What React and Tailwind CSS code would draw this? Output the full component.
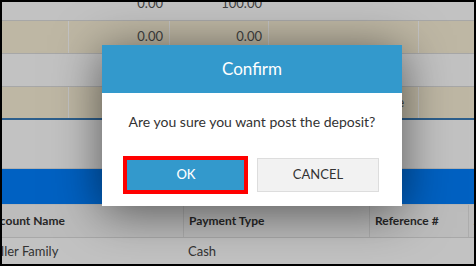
const topRows = [
  { tone: "plain", cells: ["", "0.00", "100.00", "", ""] },
  { tone: "tan", cells: ["", "0.00", "0.00", "", ""] },
  { tone: "plain", cells: ["", "", "", "", ""] },
  { tone: "tan", cells: ["", "", "", "Cheque", ""] },
];

const ConfirmDialog = () => (
  <div className="absolute left-[100px] top-[43px] w-[300px] bg-white shadow-[0_6px_45px_rgba(0,0,0,0.55)]">
    {/* Header */}
    <div className="h-[48px] bg-[#3399cc] flex items-center justify-center">
      <span className="text-[17px] text-white">Confirm</span>
    </div>

    {/* Body */}
    <div className="pt-[20px] text-center text-[14px] leading-[18px] text-[#333]">
      Are you sure you want post the deposit?
    </div>

    {/* Buttons */}
    <div className="relative flex justify-center gap-[10px] pt-[27px] pb-[14px]">
      <button className="w-[122px] h-[34px] bg-[#3399cc] text-white text-[13px] font-medium">
        OK
      </button>
      <button className="w-[122px] h-[34px] bg-[#f2f2f2] border border-[#dddddd] text-[#333] text-[13px]">
        CANCEL
      </button>
      {/* red highlight drawn over the OK button */}
      <div className="absolute left-[21px] top-[25px] w-[125px] h-[38px] border-4 border-[#ff0000]"></div>
    </div>
  </div>
);

export default function App() {
  return (
    <div className="w-[476px] h-[266px] bg-black p-[2px]" style={{ fontFamily: "Lato, 'Noto Sans', sans-serif" }}>
      <div className="relative w-full h-full overflow-hidden bg-white">
        {/* Deposit lines table */}
        <div className="mt-[-14px]">
          {topRows.map((row, i) => (
            <div
              key={i}
              className={`grid grid-cols-[66px_101px_99px_150px_1fr] h-[33px] ${
                i === topRows.length - 1
                  ? "border-b-2 border-[#3c7db9] h-[32px]"
                  : "border-b border-[#dcdcdc]"
              } ${row.tone === "tan" ? "bg-[#faf1d8]" : "bg-white"}`}
            >
              {row.cells.map((c, j) => (
                <div
                  key={j}
                  className={`flex items-center justify-end pr-[6px] text-[13px] text-[#555] ${
                    row.tone === "tan" && j > 0 ? "border-l border-white" : ""
                  } ${j === 3 ? "pr-[14px]" : ""}`}
                >
                  {c}
                </div>
              ))}
            </div>
          ))}
        </div>

        <div className="h-[48px] bg-white"></div>

        {/* Blue section bar */}
        <div className="h-[36px] bg-[#0080ff] border-t border-[#e6e6e6]"></div>

        {/* Payments table */}
        <div className="ml-[-21px] border-t border-[#eeeeee]">
          <div className="grid grid-cols-[202px_186px_99px_1fr] h-[33px] bg-[#f7f7f7] border-b border-[#dddddd] text-[12px] font-bold text-[#333]">
            <div className="flex items-center pl-[5px]">Account Name</div>
            <div className="flex items-center pl-[5px] border-l border-[#e2e2e2]">Payment Type</div>
            <div className="flex items-center pl-[5px] border-l border-[#e2e2e2]">Reference #</div>
            <div className="flex items-center pl-[5px] border-l border-[#e2e2e2]">Amount</div>
          </div>
          <div className="grid grid-cols-[202px_186px_99px_1fr] h-[28px] text-[13px] text-[#444]">
            <div className="flex items-center pl-[5px]">Miller Family</div>
            <div className="flex items-center pl-[5px]">Cash</div>
            <div className="flex items-center pl-[5px]"></div>
            <div className="flex items-center pl-[5px]"></div>
          </div>
        </div>

        {/* Modal backdrop */}
        <div className="absolute inset-0 bg-black/[0.24]"></div>

        <ConfirmDialog />
      </div>
    </div>
  );
}
